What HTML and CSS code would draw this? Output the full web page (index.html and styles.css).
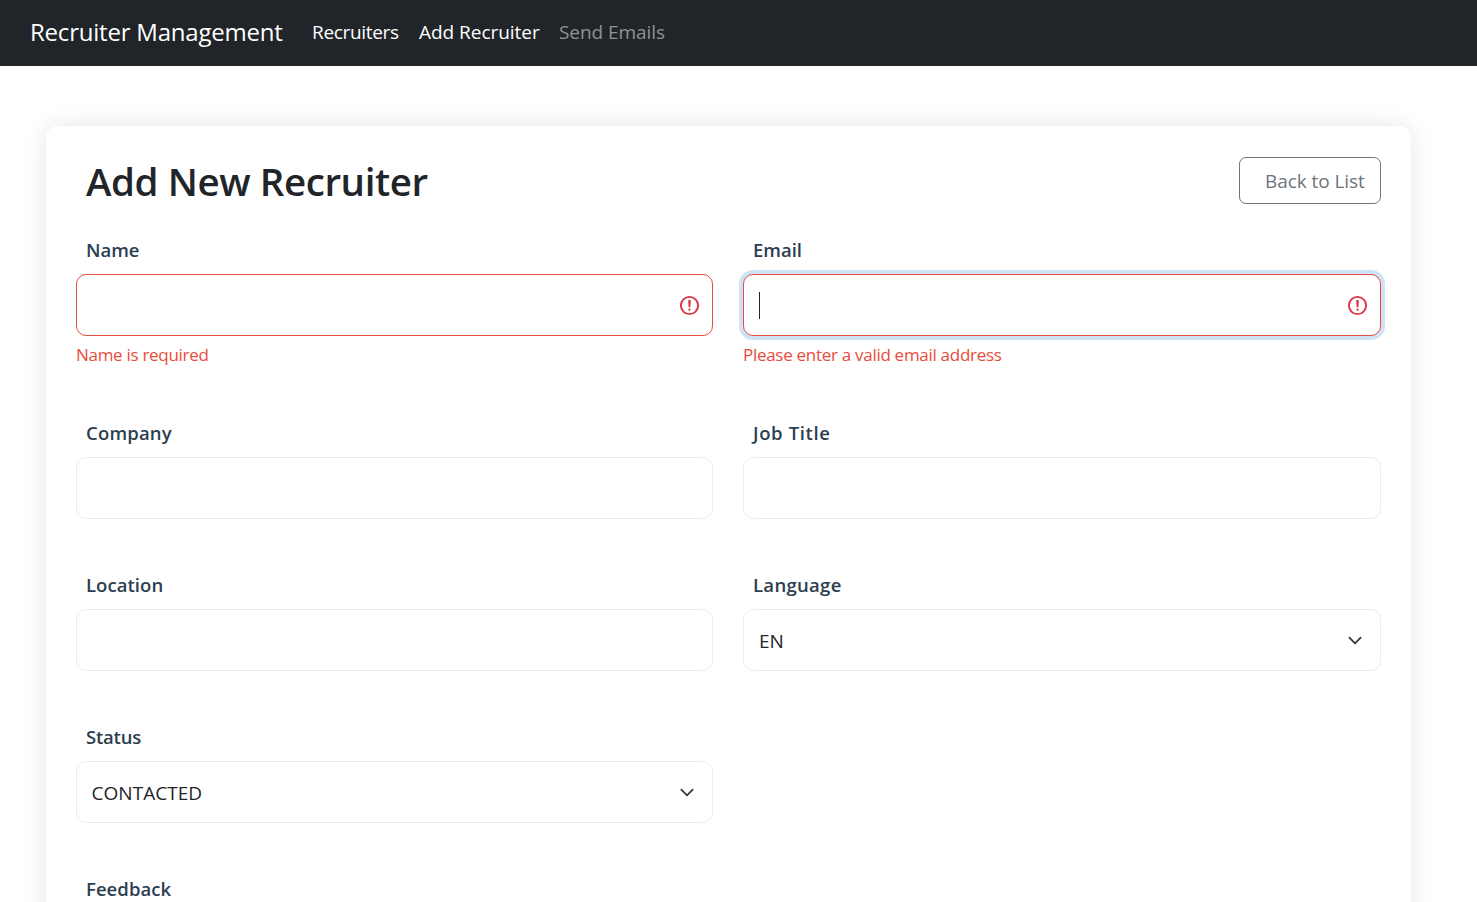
FILE: index.html
```html
<!DOCTYPE html>
<html lang="en">
<head>
<meta charset="utf-8">
<title>Recruiter Management</title>
<link rel="stylesheet" href="styles.css">
</head>
<body>
<nav class="navbar">
  <a class="brand">Recruiter Management</a>
  <a class="nav-link nav-recruiters">Recruiters</a>
  <a class="nav-link nav-add">Add Recruiter</a>
  <a class="nav-link nav-send disabled">Send Emails</a>
</nav>
<main class="card">
  <header class="card-head">
    <h1 class="title">Add New Recruiter</h1>
    <a class="btn-back">Back to List</a>
  </header>
  <form class="form-grid">
    <div class="field">
      <label class="label l-name">Name</label>
      <div class="control invalid">
        <svg class="alert-icon" viewBox="0 0 12 12" fill="none" stroke="#dc3545"><circle cx="6" cy="6" r="4.5"/><path stroke-linejoin="round" d="M5.8 3.6h.4L6 6.5z"/><circle cx="6" cy="8.2" r=".6" fill="#dc3545" stroke="none"/></svg>
      </div>
      <div class="error">Name is required</div>
    </div>
    <div class="field">
      <label class="label l-email">Email</label>
      <div class="control invalid focused">
        <span class="caret"></span>
        <svg class="alert-icon" viewBox="0 0 12 12" fill="none" stroke="#dc3545"><circle cx="6" cy="6" r="4.5"/><path stroke-linejoin="round" d="M5.8 3.6h.4L6 6.5z"/><circle cx="6" cy="8.2" r=".6" fill="#dc3545" stroke="none"/></svg>
      </div>
      <div class="error">Please enter a valid email address</div>
    </div>
    <div class="field">
      <label class="label l-company">Company</label>
      <div class="control"></div>
    </div>
    <div class="field">
      <label class="label l-job">Job Title</label>
      <div class="control"></div>
    </div>
    <div class="field">
      <label class="label l-location">Location</label>
      <div class="control"></div>
    </div>
    <div class="field">
      <label class="label l-language">Language</label>
      <div class="control">
        <span class="value v-en">EN</span>
        <svg class="chevron" viewBox="0 0 16 16"><path fill="none" stroke="#343a40" stroke-linecap="round" stroke-linejoin="round" stroke-width="2" d="m2 5 6 6 6-6"/></svg>
      </div>
    </div>
    <div class="field">
      <label class="label l-status">Status</label>
      <div class="control">
        <span class="value v-contacted">CONTACTED</span>
        <svg class="chevron" viewBox="0 0 16 16"><path fill="none" stroke="#343a40" stroke-linecap="round" stroke-linejoin="round" stroke-width="2" d="m2 5 6 6 6-6"/></svg>
      </div>
    </div>
    <div class="field wide">
      <label class="label l-feedback">Feedback</label>
    </div>
  </form>
</main>
</body>
</html>
```
FILE: styles.css
```css
* { box-sizing: border-box; }
html, body { height: 902px; overflow: hidden; }
body {
  margin: 0;
  background: #fff;
  color: #212529;
  font: 19px/30px "Segoe UI", "Open Sans", "Noto Sans", sans-serif;
  white-space: nowrap;
}
.navbar {
  display: flex;
  align-items: center;
  height: 66px;
  padding: 0 30px 2px;
  background: #212529;
  color: #fff;
}
.brand { width: 282px; font-size: 24px; letter-spacing: -0.21px; }
.nav-link { font-size: 19px; }
.nav-recruiters { width: 107px; letter-spacing: -0.32px; }
.nav-add { width: 140px; letter-spacing: -0.03px; }
.nav-send { letter-spacing: -0.05px; }
.disabled { color: #909294; }
.card {
  margin: 60px 66px 0 46px;
  height: 830px;
  padding: 30px 30px 0;
  border-radius: 12px;
  background: #fff;
  box-shadow: 0 0 25px rgba(0, 0, 0, .1);
}
.card-head {
  display: flex;
  justify-content: space-between;
  align-items: center;
  height: 49px;
  margin-bottom: 30px;
  padding-left: 10px;
}
.title { margin: 0; font-size: 38.5px; line-height: 48px; font-weight: 600; letter-spacing: -0.42px; }
.btn-back {
  width: 142px;
  height: 47px;
  padding: 8px 15px 0 25px;
  border: 1px solid #6c757d;
  border-radius: 7px;
  color: #6c757d;
  letter-spacing: -0.07px;
}
.form-grid { display: grid; grid-template-columns: 637px 638px; column-gap: 30px; }
.field { margin-bottom: 51px; }
.wide { grid-column: 1 / -1; margin-bottom: 0; }
.label { display: block; height: 30px; margin-bottom: 9px; padding-left: 10px; color: #2c3e50; font-size: 18.5px; font-weight: 600; letter-spacing: 0; }
.wide .label { height: 28px; margin-bottom: 0; }
.l-company { letter-spacing: 0.18px; }
.l-job { letter-spacing: 0.62px; }
.l-location { letter-spacing: 0.05px; }
.l-language { letter-spacing: 0.3px; }
.l-status { letter-spacing: -0.2px; }
.l-feedback { letter-spacing: 0.05px; }
.control {
  display: flex;
  align-items: center;
  justify-content: flex-end;
  height: 62px;
  padding: 0 15px;
  border: 1px solid #e9ecef;
  border-radius: 10px;
  background: #fff;
}
.invalid { border-color: #e74c3c; padding-right: 11px; }
.focused { box-shadow: 0 0 0 4px #cce4f6; }
.caret { width: 1px; height: 27px; margin-right: auto; background: #212529; }
.value { margin-right: auto; padding-top: 2px; letter-spacing: -0.1px; }
.v-contacted { margin-left: -0.5px; letter-spacing: 0.03px; }
.alert-icon { width: 23px; height: 23px; }
.chevron { width: 20px; height: 15px; }
.error { height: 25px; margin-top: 6px; color: #e74c3c; font-size: 17px; line-height: 26px; letter-spacing: -0.29px; }
```
